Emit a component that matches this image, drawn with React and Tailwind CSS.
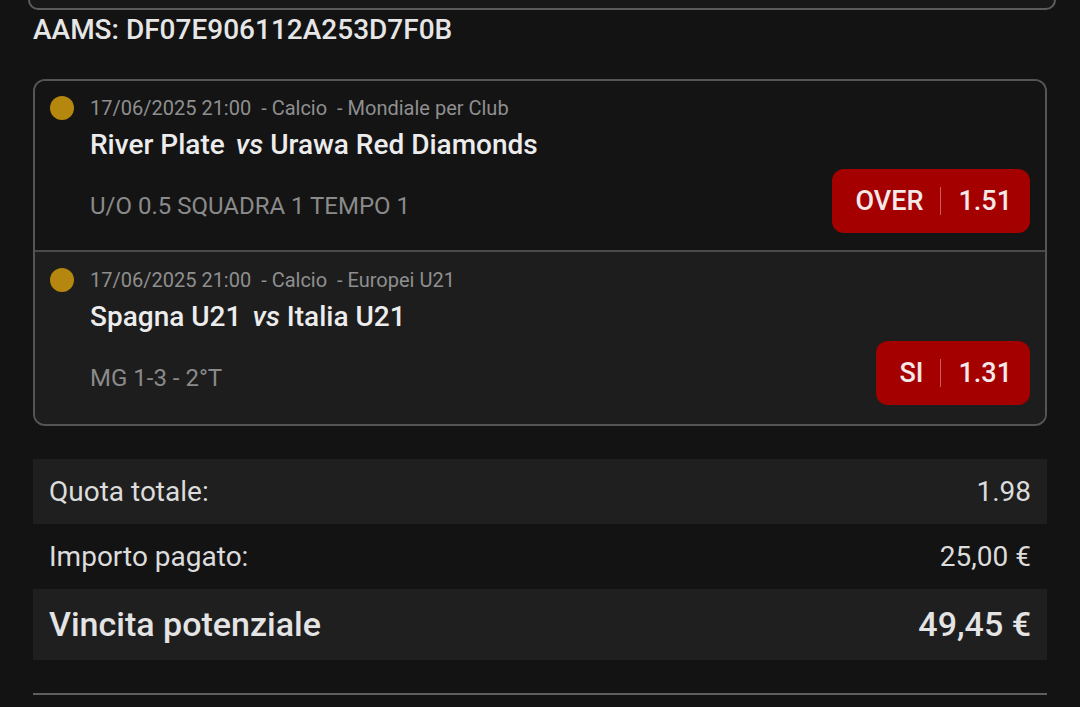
function Dot() {
  return <div className="w-[24px] h-[24px] rounded-full bg-[#b5870f] shrink-0" />
}

function OddButton({ label, odd }) {
  return (
    <div className="flex items-center h-[64px] rounded-[12px] bg-[#a50000] pl-[23px] pr-[18px] text-[27px] font-medium text-[#f3e9e9]">
      <span>{label}</span>
      <span className="mx-[17px] w-[1px] h-[28px] bg-[#d15a5a]" />
      <span>{odd}</span>
    </div>
  )
}

function Event({ date, sport, comp, home, away, market, label, odd, bg, last }) {
  return (
    <div className={`flex gap-[16px] pl-[15px] pr-[15px] ${bg} ${last ? 'pt-[16px] pb-[19px]' : 'pt-[15px] pb-[17px] border-b-2 border-[#4a4a4a]'}`}>
      <Dot />
      <div className="flex-1 flex flex-col">
        <div className="text-[20px] leading-[24px] text-[#8f8f8f] whitespace-pre">
          {date}{'  '}- {sport}{'  '}- {comp}
        </div>
        <div className="text-[28px] leading-[32px] font-medium text-[#ececec] mt-[9px]">
          {home} <span className="italic ml-[4px]">vs</span> {away}
        </div>
        <div className="flex items-center justify-between mt-[8px]">
          <div className="text-[24px] text-[#8a8a8a] mt-[10px]">{market}</div>
          <OddButton label={label} odd={odd} />
        </div>
      </div>
    </div>
  )
}

export default function App() {
  const rows = [
    { label: 'Quota totale:', value: '1.98', shaded: true },
    { label: 'Importo pagato:', value: '25,00 €', shaded: false },
  ]
  return (
    <div className="min-h-[707px] bg-[#131313] font-['Roboto',sans-serif] overflow-hidden">
      <div className="ml-[28px] mr-[24px] h-[10px] border-b-2 border-x-2 border-[#5c5c5c] rounded-b-[14px] bg-[#181818]" />
      <div className="px-[33px] pt-[4px] text-[28px] leading-[32px] font-medium text-[#e6e6e6]">
        AAMS: DF07E906112A253D7F0B
      </div>
      <div className="mx-[33px] mt-[33px] border-2 border-[#555555] rounded-[12px] overflow-hidden">
        <Event
          date="17/06/2025 21:00"
          sport="Calcio"
          comp="Mondiale per Club"
          home="River Plate"
          away="Urawa Red Diamonds"
          market="U/O 0.5 SQUADRA 1 TEMPO 1"
          label="OVER"
          odd="1.51"
          bg="bg-[#141414]"
        />
        <Event
          date="17/06/2025 21:00"
          sport="Calcio"
          comp="Europei U21"
          home="Spagna U21"
          away="Italia U21"
          market="MG 1-3 - 2°T"
          label="SI"
          odd="1.31"
          bg="bg-[#1d1d1d]"
          last
        />
      </div>
      <div className="mx-[33px] mt-[33px]">
        {rows.map((r, i) => (
          <div
            key={i}
            className={`flex items-center justify-between h-[65px] px-[16px] text-[28px] text-[#dcdcdc] ${r.shaded ? 'bg-[#1f1f1f]' : ''}`}
          >
            <span>{r.label}</span>
            <span>{r.value}</span>
          </div>
        ))}
        <div className="flex items-center justify-between h-[71px] px-[16px] bg-[#1f1f1f] text-[34px] font-medium text-[#e4e4e4]">
          <span>Vincita potenziale</span>
          <span>49,45 €</span>
        </div>
        <div className="mt-[33px] h-[2px] bg-[#5e5e5e]" />
      </div>
    </div>
  )
}
